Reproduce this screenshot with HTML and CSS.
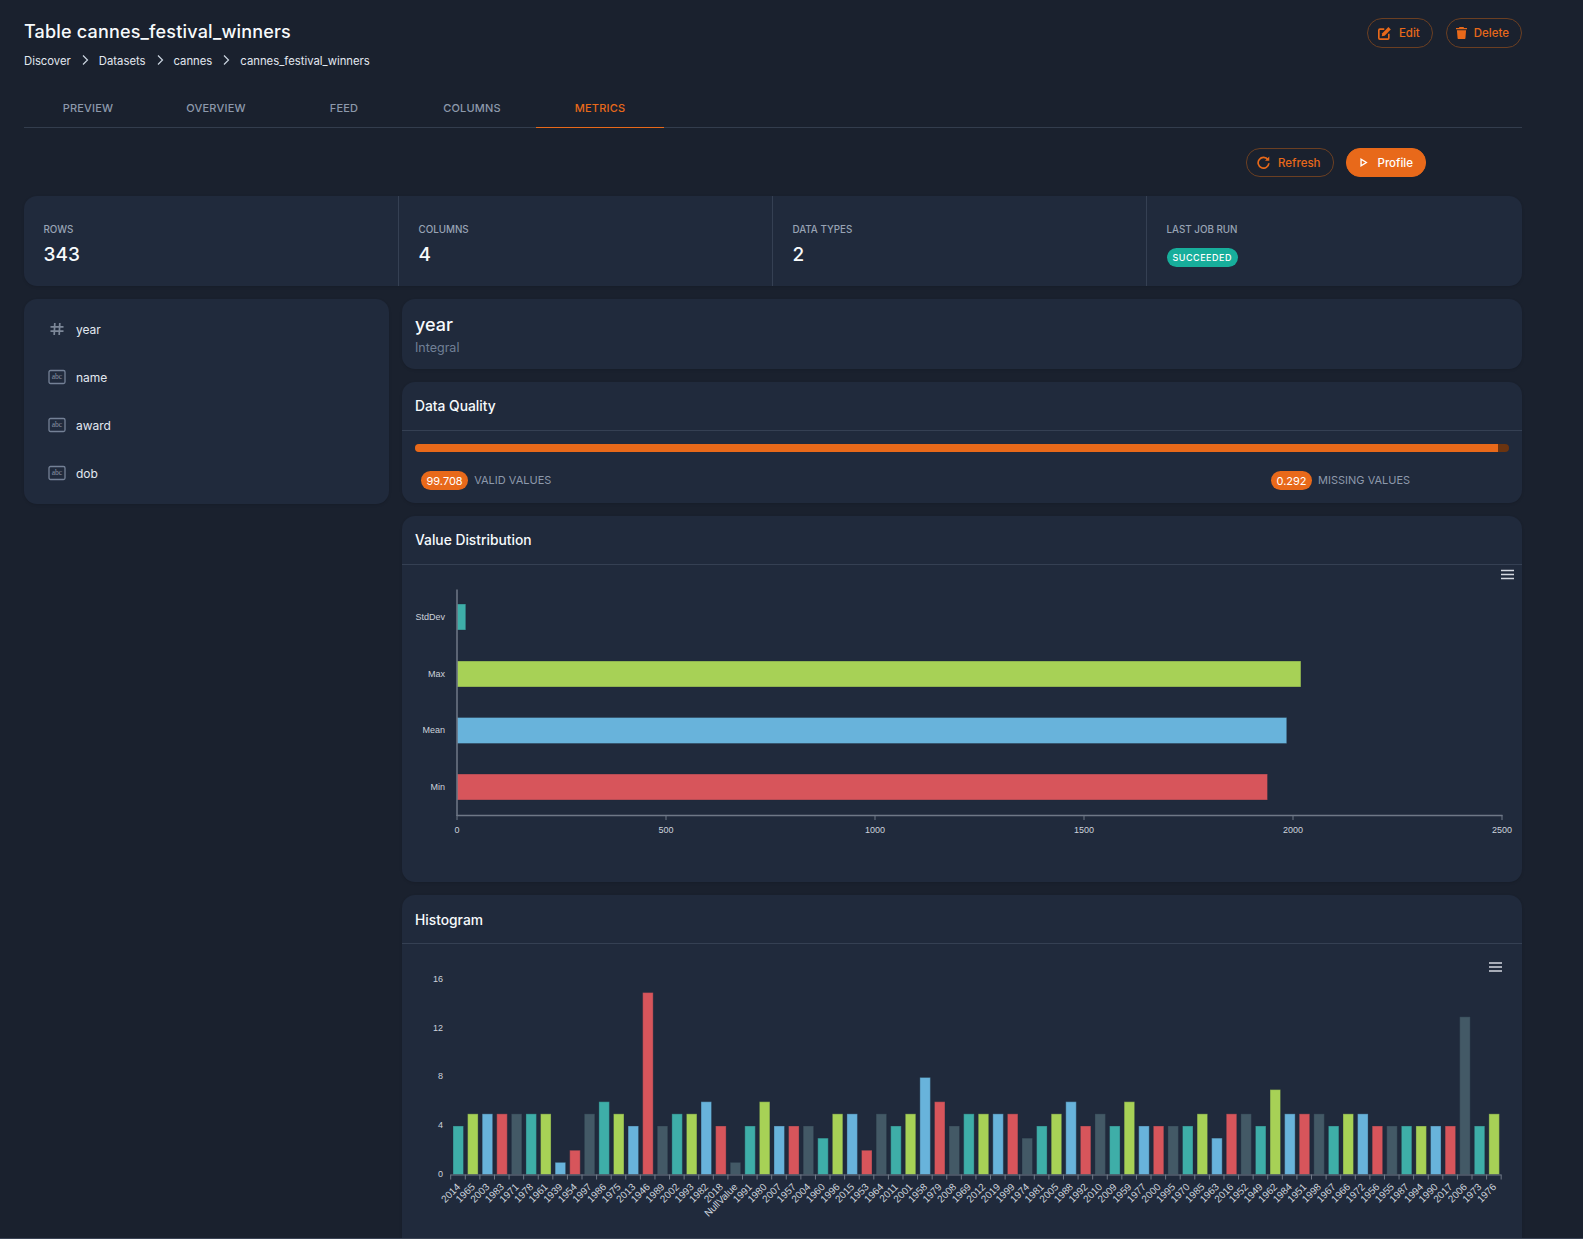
FILE: index.html
```html
<!DOCTYPE html>
<html lang="en">

<head>
    <meta charset="UTF-8">
    <meta name="viewport" content="width=device-width, initial-scale=1.0">
    <title>Table cannes_festival_winners</title>
    <link rel="stylesheet" href="styles.css">
</head>

<body>
    <div class="page">
        <header class="page-header">
            <div>
                <h1 class="page-title">Table cannes_festival_winners</h1>
                <nav class="breadcrumb">
                    <span>Discover</span>
                    <svg class="crumb-sep" viewBox="0 0 8 12"><path d="M2 1.5 6.5 6 2 10.5" /></svg>
                    <span>Datasets</span>
                    <svg class="crumb-sep" viewBox="0 0 8 12"><path d="M2 1.5 6.5 6 2 10.5" /></svg>
                    <span>cannes</span>
                    <svg class="crumb-sep" viewBox="0 0 8 12"><path d="M2 1.5 6.5 6 2 10.5" /></svg>
                    <span>cannes_festival_winners</span>
                </nav>
            </div>
            <div class="header-actions">
                <button class="btn btn-outline">
                    <svg class="btn-icon" viewBox="1.1 .7 14.3 14.3">
                        <path class="line" d="M8 3H3.2C2.5 3 2 3.5 2 4.2v8.6c0 .7.5 1.2 1.2 1.2h8.6c.7 0 1.2-.5 1.2-1.2V8" />
                        <path class="solid" d="M12.6 .8 15.2 3.4 8.4 10.2 5.2 10.8 5.8 7.6Z" />
                    </svg>
                    Edit
                </button>
                <button class="btn btn-outline">
                    <svg class="btn-icon btn-icon-narrow" viewBox="2 1 12 15" preserveAspectRatio="none">
                        <path class="solid" d="M5.8 1h4.4l.6 1.2H14v1.6H2V2.2h3.2ZM3 5h10l-.7 9.8c0 .7-.5 1.2-1.1 1.2H4.8c-.6 0-1.1-.5-1.1-1.2Z" />
                    </svg>
                    Delete
                </button>
            </div>
        </header>

        <nav class="tabs">
            <a class="tab">Preview</a>
            <a class="tab">Overview</a>
            <a class="tab">Feed</a>
            <a class="tab">Columns</a>
            <a class="tab tab-active">Metrics</a>
        </nav>

        <div class="toolbar">
            <button class="btn btn-outline">
                <svg class="btn-icon" viewBox="1 1 14 14">
                    <path class="line" d="M12.8 5A5.8 5.8 0 1 0 13.8 8.8" />
                    <path class="solid" d="M14.2 1.6v4.6H9.6Z" />
                </svg>
                Refresh
            </button>
            <button class="btn btn-solid">
                <svg class="btn-icon" viewBox="0 0 16 16">
                    <path class="line-white" d="M5 4v8l6.5-4Z" />
                </svg>
                Profile
            </button>
        </div>

        <section class="card stats">
            <div class="stat">
                <div class="stat-label">Rows</div>
                <div class="stat-value">343</div>
            </div>
            <div class="stat">
                <div class="stat-label">Columns</div>
                <div class="stat-value">4</div>
            </div>
            <div class="stat">
                <div class="stat-label">Data Types</div>
                <div class="stat-value">2</div>
            </div>
            <div class="stat">
                <div class="stat-label">Last Job Run</div>
                <div class="status-badge">Succeeded</div>
            </div>
        </section>

        <div class="metrics">
            <aside class="card column-list">
                <div class="column-item">
                    <svg class="column-icon column-icon-hash" viewBox="0 0 18 18"><path d="M6.8 3 6.2 15M11.8 3 11.2 15M2.5 6.8h13M2.5 11.2h13" /></svg>
                    <span>year</span>
                </div>
                <div class="column-item">
                    <svg class="column-icon" viewBox="0 0 18 18"><rect x="1" y="2.5" width="16" height="13" rx="1.5" /><text class="abc" x="9" y="11.3">abc</text></svg>
                    <span>name</span>
                </div>
                <div class="column-item">
                    <svg class="column-icon" viewBox="0 0 18 18"><rect x="1" y="2.5" width="16" height="13" rx="1.5" /><text class="abc" x="9" y="11.3">abc</text></svg>
                    <span>award</span>
                </div>
                <div class="column-item">
                    <svg class="column-icon" viewBox="0 0 18 18"><rect x="1" y="2.5" width="16" height="13" rx="1.5" /><text class="abc" x="9" y="11.3">abc</text></svg>
                    <span>dob</span>
                </div>
            </aside>

            <main class="metric-cards">
                <section class="card column-head">
                    <div class="column-name">year</div>
                    <div class="column-type">Integral</div>
                </section>

                <section class="card">
                    <h2 class="card-title">Data Quality</h2>
                    <div class="quality">
                        <div class="quality-bar">
                            <div class="quality-fill" style="width: 98.99%"></div>
                        </div>
                        <div class="quality-legend">
                            <div class="legend-item">
                                <span class="value-badge">99.708</span>
                                <span class="legend-label">VALID VALUES</span>
                            </div>
                            <div class="legend-item">
                                <span class="value-badge">0.292</span>
                                <span class="legend-label">MISSING VALUES</span>
                            </div>
                        </div>
                    </div>
                </section>

                <section class="card">
                    <h2 class="card-title">Value Distribution</h2>
                    <svg id="distribution-chart" class="chart chart-distribution" viewBox="0 0 1120 317"></svg>
                </section>

                <section class="card">
                    <h2 class="card-title card-title-low">Histogram</h2>
                    <svg id="histogram-chart" class="chart chart-histogram" viewBox="0 0 1120 310"></svg>
                </section>
            </main>
        </div>
    </div>

    <script src="charts.js"></script>
</body>

</html>
```

FILE: styles.css
```css
* {
    box-sizing: border-box;
}

body {
    margin: 0;
    background-color: #1a212e;
    color: #f7fafc;
    font-family: Inter, "Liberation Sans", sans-serif;
}

.page {
    height: 100vh;
    overflow: hidden;
    padding: 18px 61px 0 24px;
    border-bottom: 1px solid #3a4354;
}

/* Header */
.page-header {
    display: flex;
    justify-content: space-between;
    align-items: flex-start;
}

.page-title {
    margin: 0;
    font-size: 18px;
    line-height: 27px;
    font-weight: 500;
    letter-spacing: 0.18px;
}

.breadcrumb {
    display: flex;
    align-items: center;
    gap: 10px;
    margin-top: 7px;
    font-size: 11.3px;
    line-height: 18px;
    color: #e2e8f0;
}

.crumb-sep {
    width: 8px;
    height: 12px;
    margin-top: -3px;
    fill: none;
    stroke: #cbd5e0;
    stroke-width: 1.2;
}

.header-actions {
    display: flex;
    gap: 13px;
}

/* Buttons */
.btn {
    display: inline-flex;
    align-items: center;
    gap: 8px;
    height: 30px;
    padding: 0 12px 0 10px;
    border-radius: 15px;
    font-family: inherit;
    font-size: 11.5px;
    font-weight: 500;
}

.btn-outline {
    background: transparent;
    border: 1px solid #6b3f22;
    color: #e8691a;
}

.btn-solid {
    background-color: #e8691a;
    border: 1px solid #e8691a;
    color: #fff;
}

.btn-icon {
    width: 13px;
    height: 13px;
}

.btn-icon-narrow {
    width: 11px;
    height: 12px;
    margin: 0 -1px;
}

.btn-icon .line {
    fill: none;
    stroke: #e8691a;
    stroke-width: 1.8;
}

.btn-icon .solid {
    fill: #e8691a;
}

.btn-icon .line-white {
    fill: none;
    stroke: #fff;
    stroke-width: 1.7;
}

/* Tabs */
.tabs {
    display: flex;
    margin-top: 26px;
    border-bottom: 1px solid #333d4d;
}

.tab {
    width: 128px;
    height: 32px;
    margin-bottom: -1px;
    border-bottom: 1px solid transparent;
    text-align: center;
    font-size: 11px;
    line-height: 24px;
    font-weight: 500;
    letter-spacing: 0.2px;
    text-transform: uppercase;
    color: #8d99ab;
}

.tab-active {
    color: #e8691a;
    border-bottom-color: #e8691a;
}

.toolbar {
    display: flex;
    justify-content: flex-end;
    gap: 12px;
    margin-top: 20px;
    padding-right: 96px;
}

.toolbar .btn {
    height: 29px;
    border-radius: 14px;
}

/* Cards */
.card {
    background-color: #202a3c;
    border-radius: 13px;
    box-shadow: 0 1px 3px rgba(0, 0, 0, 0.12);
}

.card-title {
    margin: 0;
    height: 49px;
    padding: 0 13px;
    border-bottom: 1px solid #354053;
    font-size: 13.8px;
    line-height: 49px;
    font-weight: 500;
}

.card-title-low {
    line-height: 51px;
}

/* Stats */
.stats {
    display: grid;
    grid-template-columns: repeat(3, 374px) 1fr;
    height: 90px;
    margin-top: 19px;
}

.stat {
    padding: 27px 19px 0 19.5px;
    border-left: 1px solid #354053;
}

.stat:first-child {
    border-left: 0;
}

.stat-label {
    font-size: 9.8px;
    line-height: 13px;
    font-weight: 500;
    text-transform: uppercase;
    color: #98a3b4;
}

.stat-value {
    margin-top: 5px;
    font-size: 19px;
    line-height: 28px;
    font-weight: 500;
}

.status-badge {
    width: fit-content;
    margin-top: 12px;
    padding: 0 6px;
    height: 19px;
    border-radius: 10px;
    background-color: #17ae9b;
    font-size: 9px;
    line-height: 19px;
    font-weight: 500;
    letter-spacing: 0.5px;
    text-transform: uppercase;
    color: #fff;
}

/* Metrics layout */
.metrics {
    display: grid;
    grid-template-columns: 365px 1fr;
    gap: 13px;
    align-items: start;
    margin-top: 13px;
}

.column-list {
    padding: 6px 0 7px;
}

.column-item {
    display: flex;
    align-items: center;
    gap: 10px;
    height: 48px;
    padding-left: 24px;
    font-size: 12px;
    color: #e2e8f0;
}

.column-icon {
    width: 18px;
    height: 18px;
    fill: none;
    stroke: #748196;
    stroke-width: 1.3;
}

.column-icon-hash {
    stroke: #7c8798;
    stroke-width: 1.7;
}

.column-icon .abc {
    fill: #8a95a6;
    stroke: none;
    font-family: "Liberation Serif", serif;
    font-size: 7.5px;
    text-anchor: middle;
}

.metric-cards {
    display: flex;
    flex-direction: column;
    gap: 13px;
}

.column-head {
    height: 70px;
    padding: 12px 13px;
}

.column-name {
    font-size: 18px;
    line-height: 27px;
    font-weight: 500;
}

.column-type {
    font-size: 12.5px;
    line-height: 19px;
    color: #718096;
}

/* Data quality */
.quality {
    height: 72px;
    padding: 13px 13px 0;
}

.quality-bar {
    height: 8px;
    border-radius: 4px;
    overflow: hidden;
    background-color: #6b3410;
}

.quality-fill {
    height: 100%;
    background-color: #e8691a;
}

.quality-legend {
    display: grid;
    grid-template-columns: 850px 1fr;
    margin-top: 19px;
    padding-left: 6px;
}

.legend-item {
    display: flex;
    align-items: center;
    gap: 6px;
}

.value-badge {
    height: 19px;
    padding: 0 5.5px;
    border-radius: 10px;
    background-color: #e8691a;
    font-size: 11px;
    line-height: 20px;
    color: #fff;
}

.legend-label {
    margin-top: -1px;
    font-size: 11px;
    color: #8d99ab;
}

/* Charts */
.chart {
    display: block;
    width: 100%;
    font-family: "Liberation Sans", Arial, sans-serif;
    font-size: 9px;
}

.chart-distribution {
    height: 317px;
}

.chart-histogram {
    height: 310px;
}

.chart text {
    fill: #ccd2db;
}

.chart .rotated-label {
    font-size: 10px;
}

.axis {
    stroke: #6f7887;
    stroke-width: 1;
    fill: none;
}

.axis-thick {
    stroke-width: 1.5;
}

.chart .bar {
    stroke: rgba(32, 42, 60, 0.35);
    stroke-width: 1;
}

.menu-icon {
    stroke: #d5d9e0;
    stroke-width: 1.5;
}
```

FILE: charts.js
```js
// Colours run in the same order on both charts
const COLORS = ['#3eaea8', '#a7d156', '#68b3db', '#d7555b', '#435966'];
const SVG_NS = 'http://www.w3.org/2000/svg';

function add(svg, tag, attrs, text) {
    const el = document.createElementNS(SVG_NS, tag);
    Object.keys(attrs).forEach(key => el.setAttribute(key, attrs[key]));
    if (text !== undefined) el.textContent = text;
    svg.appendChild(el);
    return el;
}

function addMenu(svg, x, y) {
    [-4, 0, 4].forEach(dy => {
        add(svg, 'line', { class: 'menu-icon', x1: x, x2: x + 13, y1: y + dy, y2: y + dy });
    });
}

function drawDistribution() {
    const svg = document.getElementById('distribution-chart');
    const originX = 55;
    const scale = 0.418;
    const rows = [
        { name: 'StdDev', value: 21, y: 39, color: COLORS[0] },
        { name: 'Max', value: 2019, y: 96, color: COLORS[1] },
        { name: 'Mean', value: 1985, y: 152.5, color: COLORS[2] },
        { name: 'Min', value: 1939, y: 209, color: COLORS[3] }
    ];

    rows.forEach(row => {
        add(svg, 'rect', { class: 'bar', x: originX, y: row.y, width: row.value * scale, height: 26, fill: row.color });
        add(svg, 'text', { x: originX - 12, y: row.y + 15.5, 'text-anchor': 'end' }, row.name);
    });

    add(svg, 'path', { class: 'axis axis-thick', d: 'M55 24.5V251M55 250.5H1100.5' });
    [0, 500, 1000, 1500, 2000, 2500].forEach(tick => {
        const x = originX + tick * scale;
        add(svg, 'line', { class: 'axis', x1: x, x2: x, y1: 250, y2: 255 });
        add(svg, 'text', { x: x, y: 268, 'text-anchor': 'middle' }, tick);
    });

    addMenu(svg, 1099, 9.5);
}

function drawHistogram() {
    const svg = document.getElementById('histogram-chart');
    const baseY = 230.5;
    const unit = 12.13;
    const step = 14.59;
    const originX = 48.7;
    const data = [
        ['2014', 4], ['1965', 5], ['2003', 5], ['1983', 5], ['1971', 5], ['1978', 5], ['1961', 5], ['1939', 1],
        ['1954', 2], ['1997', 5], ['1986', 6], ['1975', 5], ['2013', 4], ['1946', 15], ['1989', 4], ['2002', 5],
        ['1993', 5], ['1982', 6], ['2018', 4], ['NullValue', 1], ['1991', 4], ['1980', 6], ['2007', 4], ['1957', 4],
        ['2004', 4], ['1960', 3], ['1996', 5], ['2015', 5], ['1953', 2], ['1964', 5], ['2011', 4], ['2001', 5],
        ['1958', 8], ['1979', 6], ['2008', 4], ['1969', 5], ['2012', 5], ['2019', 5], ['1999', 5], ['1974', 3],
        ['1981', 4], ['2005', 5], ['1988', 6], ['1992', 4], ['2010', 5], ['2009', 4], ['1959', 6], ['1977', 4],
        ['2000', 4], ['1995', 4], ['1970', 4], ['1985', 5], ['1963', 3], ['2016', 5], ['1952', 5], ['1949', 4],
        ['1962', 7], ['1984', 5], ['1951', 5], ['1998', 5], ['1967', 4], ['1966', 5], ['1972', 5], ['1956', 4],
        ['1955', 4], ['1987', 4], ['1994', 4], ['1990', 4], ['2017', 4], ['2006', 13], ['1973', 4], ['1976', 5]
    ];

    [0, 4, 8, 12, 16].forEach(tick => {
        add(svg, 'text', { x: 41, y: baseY - tick * unit + 2, 'text-anchor': 'end' }, tick);
    });

    data.forEach((item, i) => {
        const center = originX + step * (i + 0.5);
        const height = item[1] * unit;
        const labelX = center + 3;
        const labelY = baseY + 13;
        add(svg, 'rect', { class: 'bar', x: center - 5, y: baseY - height, width: 10.5, height: height, fill: COLORS[i % COLORS.length] });
        add(svg, 'line', { class: 'axis', x1: center - step / 2, x2: center - step / 2, y1: baseY, y2: baseY + 5 });
        add(svg, 'text', { class: 'rotated-label', x: labelX, y: labelY, 'text-anchor': 'end', transform: `rotate(-45 ${labelX} ${labelY})` }, item[0]);
    });

    const endX = originX + step * 72;
    add(svg, 'line', { class: 'axis', x1: endX, x2: endX, y1: baseY, y2: baseY + 5 });
    add(svg, 'line', { class: 'axis', x1: originX, x2: endX, y1: baseY + 0.5, y2: baseY + 0.5 });

    addMenu(svg, 1087, 23);
}

drawDistribution();
drawHistogram();
```
